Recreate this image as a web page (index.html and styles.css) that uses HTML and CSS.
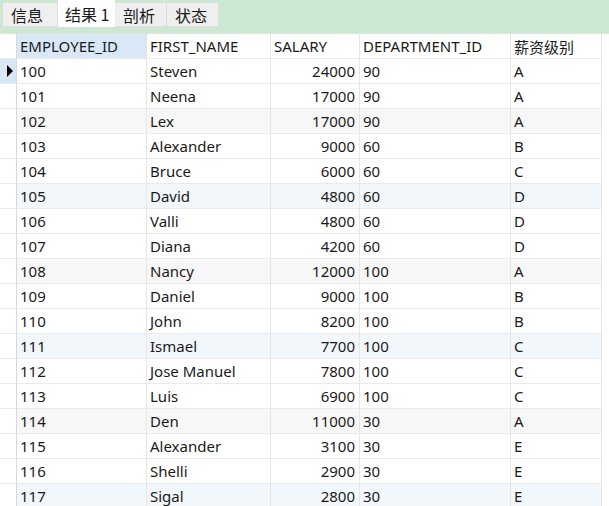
FILE: index.html
```html
<!DOCTYPE html>
<html>
<head>
<meta charset="utf-8">
<link rel="stylesheet" href="styles.css">
</head>
<body>
<div class="tabbar">
  <div class="tab t1">信息</div>
  <div class="tab active">结果 1</div>
  <div class="tab">剖析</div>
  <div class="tab">状态</div>
</div>
<div class="grid">
  <div class="row head">
    <div class="cell rh"></div>
    <div class="cell sel">EMPLOYEE_ID</div>
    <div class="cell">FIRST_NAME</div>
    <div class="cell">SALARY</div>
    <div class="cell">DEPARTMENT_ID</div>
    <div class="cell cjk">薪资级别</div>
  </div>
  <div class="row"><div class="cell rh cur"><span class="arrow"></span></div><div class="cell">100</div><div class="cell">Steven</div><div class="cell num">24000</div><div class="cell">90</div><div class="cell">A</div></div>
  <div class="row"><div class="cell rh"></div><div class="cell">101</div><div class="cell">Neena</div><div class="cell num">17000</div><div class="cell">90</div><div class="cell">A</div></div>
  <div class="row gray"><div class="cell rh"></div><div class="cell">102</div><div class="cell">Lex</div><div class="cell num">17000</div><div class="cell">90</div><div class="cell">A</div></div>
  <div class="row"><div class="cell rh"></div><div class="cell">103</div><div class="cell">Alexander</div><div class="cell num">9000</div><div class="cell">60</div><div class="cell">B</div></div>
  <div class="row"><div class="cell rh"></div><div class="cell">104</div><div class="cell">Bruce</div><div class="cell num">6000</div><div class="cell">60</div><div class="cell">C</div></div>
  <div class="row blue"><div class="cell rh"></div><div class="cell">105</div><div class="cell">David</div><div class="cell num">4800</div><div class="cell">60</div><div class="cell">D</div></div>
  <div class="row"><div class="cell rh"></div><div class="cell">106</div><div class="cell">Valli</div><div class="cell num">4800</div><div class="cell">60</div><div class="cell">D</div></div>
  <div class="row"><div class="cell rh"></div><div class="cell">107</div><div class="cell">Diana</div><div class="cell num">4200</div><div class="cell">60</div><div class="cell">D</div></div>
  <div class="row gray"><div class="cell rh"></div><div class="cell">108</div><div class="cell">Nancy</div><div class="cell num">12000</div><div class="cell">100</div><div class="cell">A</div></div>
  <div class="row"><div class="cell rh"></div><div class="cell">109</div><div class="cell">Daniel</div><div class="cell num">9000</div><div class="cell">100</div><div class="cell">B</div></div>
  <div class="row"><div class="cell rh"></div><div class="cell">110</div><div class="cell">John</div><div class="cell num">8200</div><div class="cell">100</div><div class="cell">B</div></div>
  <div class="row blue"><div class="cell rh"></div><div class="cell">111</div><div class="cell">Ismael</div><div class="cell num">7700</div><div class="cell">100</div><div class="cell">C</div></div>
  <div class="row"><div class="cell rh"></div><div class="cell">112</div><div class="cell">Jose Manuel</div><div class="cell num">7800</div><div class="cell">100</div><div class="cell">C</div></div>
  <div class="row"><div class="cell rh"></div><div class="cell">113</div><div class="cell">Luis</div><div class="cell num">6900</div><div class="cell">100</div><div class="cell">C</div></div>
  <div class="row gray"><div class="cell rh"></div><div class="cell">114</div><div class="cell">Den</div><div class="cell num">11000</div><div class="cell">30</div><div class="cell">A</div></div>
  <div class="row"><div class="cell rh"></div><div class="cell">115</div><div class="cell">Alexander</div><div class="cell num">3100</div><div class="cell">30</div><div class="cell">E</div></div>
  <div class="row"><div class="cell rh"></div><div class="cell">116</div><div class="cell">Shelli</div><div class="cell num">2900</div><div class="cell">30</div><div class="cell">E</div></div>
  <div class="row blue"><div class="cell rh"></div><div class="cell">117</div><div class="cell">Sigal</div><div class="cell num">2800</div><div class="cell">30</div><div class="cell">E</div></div>
</div>
</body>
</html>
```

FILE: styles.css
```css
html, body {
  margin: 0;
  padding: 0;
  background: #ffffff;
  overflow: hidden;
}
body {
  width: 609px;
  height: 506px;
  font-family: "Noto Sans", "Noto Sans CJK SC", sans-serif;
  font-size: 15px;
  color: #1a1a1a;
}
.tabbar {
  height: 34px;
  box-sizing: border-box;
  background: #cde8d2;
  border-bottom: 1px solid #dde6de;
  display: flex;
  align-items: flex-start;
  padding-left: 2px;
}
.tab {
  box-sizing: border-box;
  height: 25px;
  margin-top: 2px;
  width: 52px;
  background: #efefef;
  border: 1px solid #dddddd;
  border-left: none;
  display: flex;
  align-items: center;
  padding-left: 8px;
  font-family: "Noto Sans CJK SC", sans-serif;
  font-size: 16px;
  line-height: 1;
}
.tab.t1 {
  width: 56px;
  border-left: 1px solid #dddddd;
}
.tab.active {
  background: #ffffff;
  height: 27px;
  margin-top: 0;
  width: 57px;
  padding-left: 7px;
  border: none;
}
.grid {
  width: 602px;
}
.row {
  display: grid;
  grid-template-columns: 17px 130px 124px 89px 151px 91px;
}
.cell {
  box-sizing: border-box;
  height: 25px;
  padding: 0 3px;
  border-right: 1px solid #e6e6e6;
  border-bottom: 1px solid #eaeaea;
  white-space: nowrap;
  overflow: hidden;
  display: flex;
  align-items: center;
  line-height: 1;
}
.cell.rh {
  padding: 0;
  border-right: 1px solid #d8d8d8;
  background: #ffffff;
}
.head .sel {
  background: #d9e8f7;
}
.cjk {
  font-family: "Noto Sans CJK SC", sans-serif;
}
.cell.num {
  justify-content: flex-end;
  padding-right: 4px;
}
.row.gray .cell {
  background: #f7f7f7;
}
.row.blue .cell {
  background: #f2f7fc;
}
.row .cell.rh {
  background: #ffffff;
}
.row .cell.rh.cur {
  background: #d9e8f7;
}
.arrow {
  display: block;
  width: 0;
  height: 0;
  margin-left: 7px;
  border-top: 6px solid transparent;
  border-bottom: 6px solid transparent;
  border-left: 6px solid #000000;
}
```
